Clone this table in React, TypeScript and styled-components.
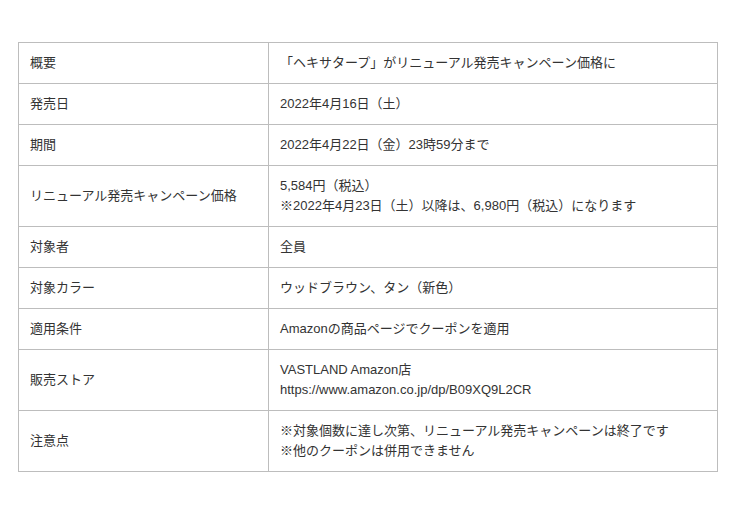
import React from "react";
import styled, { createGlobalStyle } from "styled-components";

const Global = createGlobalStyle`
  html, body { margin: 0; padding: 0; background: #ffffff; }
  body { font-family: "Liberation Sans", "Noto Sans CJK JP", sans-serif; }
`;

const Page = styled.div`
  padding: 42px 0 0 18px;
`;

const Table = styled.table`
  width: 700px;
  border-collapse: collapse;
  table-layout: fixed;
  color: #333333;
  font-size: 13px;
  line-height: 20px;
`;

const Cell = styled.td<{ $head?: boolean }>`
  border: 1px solid #bdbdbd;
  padding: 10px 11px;
  vertical-align: middle;
  box-sizing: border-box;
  width: ${(p) => (p.$head ? "250px" : "auto")};
`;

const Line = styled.div``;

const rows: [string, string[]][] = [
  ["概要", ["「ヘキサタープ」がリニューアル発売キャンペーン価格に"]],
  ["発売日", ["2022年4月16日（土）"]],
  ["期間", ["2022年4月22日（金）23時59分まで"]],
  ["リニューアル発売キャンペーン価格", ["5,584円（税込）", "※2022年4月23日（土）以降は、6,980円（税込）になります"]],
  ["対象者", ["全員"]],
  ["対象カラー", ["ウッドブラウン、タン（新色）"]],
  ["適用条件", ["Amazonの商品ページでクーポンを適用"]],
  ["販売ストア", ["VASTLAND Amazon店", "https://www.amazon.co.jp/dp/B09XQ9L2CR"]],
  ["注意点", ["※対象個数に達し次第、リニューアル発売キャンペーンは終了です", "※他のクーポンは併用できません"]],
];

export default function App() {
  return (
    <Page>
      <Global />
      <Table>
        <tbody>
          {rows.map(([k, v]) => (
            <tr key={k}>
              <Cell $head>{k}</Cell>
              <Cell>
                {v.map((l) => (
                  <Line key={l}>{l}</Line>
                ))}
              </Cell>
            </tr>
          ))}
        </tbody>
      </Table>
    </Page>
  );
}
